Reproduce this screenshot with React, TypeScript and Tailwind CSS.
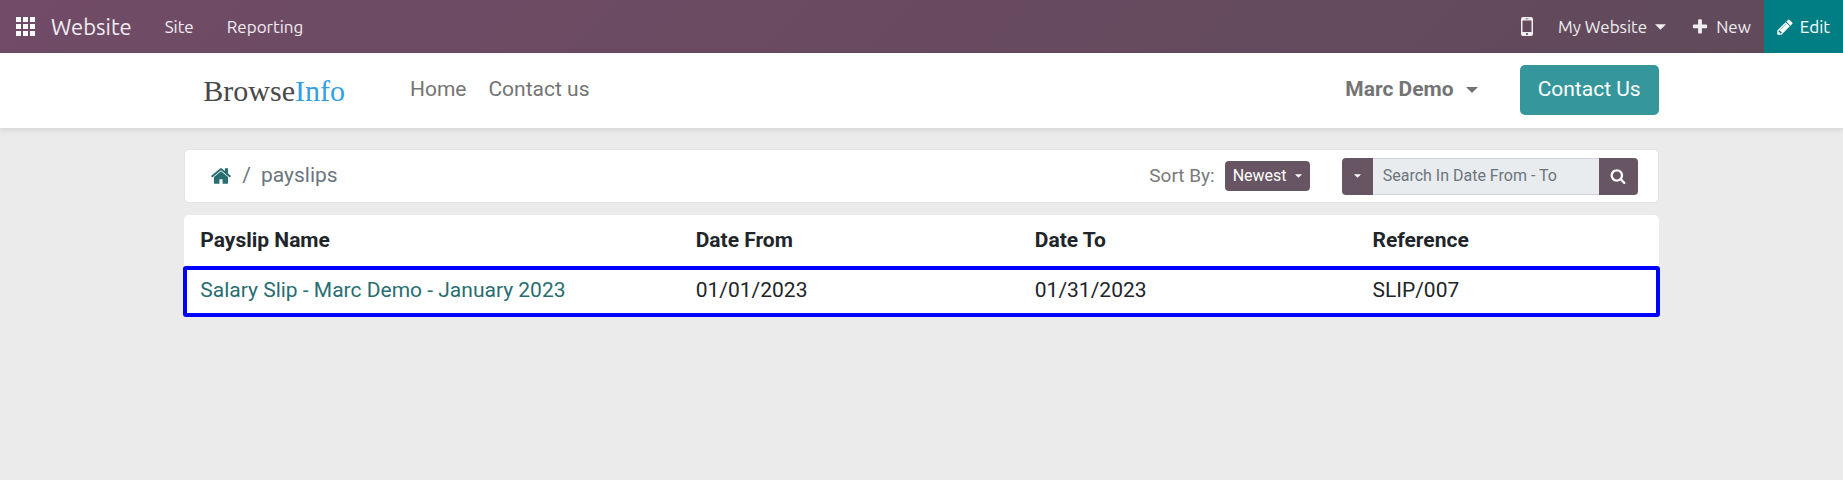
import type { ReactNode } from "react";

type IconProps = { className?: string };

function Glyph({ className = "", children }: IconProps & { children: ReactNode }) {
  return (
    <svg viewBox="0 0 1792 1792" fill="currentColor" aria-hidden="true" className={`shrink-0 ${className}`}>
      {children}
    </svg>
  );
}

const HomeIcon = ({ className }: IconProps) => (
  <Glyph className={className}>
    <path d="M1472 992v480q0 26-19 45t-45 19h-384v-384h-256v384h-384q-26 0-45-19t-19-45v-480q0-1 .5-3t.5-3l575-474 575 474q1 2 1 6zm223-69l-62 74q-8 9-21 11h-3q-13 0-21-7l-692-577-692 577q-12 8-24 7-13-2-21-11l-62-74q-8-10-7-23.5t11-21.5l719-599q32-26 76-26t76 26l244 204v-195q0-14 9-23t23-9h192q14 0 23 9t9 23v408l219 182q10 8 11 21.5t-7 23.5z" />
  </Glyph>
);

const SearchIcon = ({ className }: IconProps) => (
  <Glyph className={className}>
    <path d="M1216 832q0-185-131.5-316.5t-316.5-131.5-316.5 131.5-131.5 316.5 131.5 316.5 316.5 131.5 316.5-131.5 131.5-316.5zm512 832q0 52-38 90t-90 38q-54 0-90-38l-343-342q-179 124-399 124-143 0-273.5-55.5t-225-150-150-225-55.5-273.5 55.5-273.5 150-225 225-150 273.5-55.5 273.5 55.5 225 150 150 225 55.5 273.5q0 220-124 399l343 343q37 37 37 90z" />
  </Glyph>
);

const PencilIcon = ({ className }: IconProps) => (
  <Glyph className={className}>
    <path d="M491 1536l91-91-235-235-91 91v107h128v128h107zm523-928q0-22-22-22-10 0-17 7l-542 542q-7 7-7 17 0 22 22 22 10 0 17-7l542-542q7-7 7-17zm-54-192l416 416-832 832h-416v-416zm683 96q0 53-37 90l-166 166-416-416 166-165q36-38 90-38 53 0 91 38l235 234q37 39 37 91z" />
  </Glyph>
);

const PlusIcon = ({ className }: IconProps) => (
  <Glyph className={className}>
    <path d="M1600 736v192q0 40-28 68t-68 28h-416v416q0 40-28 68t-68 28h-192q-40 0-68-28t-28-68v-416h-416q-40 0-68-28t-28-68v-192q0-40 28-68t68-28h416v-416q0-40 28-68t68-28h192q40 0 68 28t28 68v416h416q40 0 68 28t28 68z" />
  </Glyph>
);

const MobileIcon = ({ className = "" }: IconProps) => (
  <svg viewBox="0 0 12 19" fill="currentColor" aria-hidden="true" className={`shrink-0 ${className}`}>
    <path
      fillRule="evenodd"
      d="M2 0h8a2 2 0 0 1 2 2v15a2 2 0 0 1-2 2H2a2 2 0 0 1-2-2V2a2 2 0 0 1 2-2zM2 3.4a.5.5 0 0 0-.5.5v10.6a.5.5 0 0 0 .5.5h8a.5.5 0 0 0 .5-.5V3.9a.5.5 0 0 0-.5-.5zM6 15.9a1.1 1.1 0 1 0 0 2.2 1.1 1.1 0 0 0 0-2.2zM4.6 1.5v.7h2.8v-.7z"
    />
  </svg>
);

const Caret = ({ className = "" }: IconProps) => (
  <svg viewBox="0 0 12 6" fill="currentColor" aria-hidden="true" className={`shrink-0 ${className}`}>
    <path d="M0 0h12L6 6z" />
  </svg>
);

const GridIcon = ({ className = "" }: IconProps) => (
  <svg viewBox="0 0 19 19" fill="currentColor" aria-hidden="true" className={`shrink-0 ${className}`}>
    {[0, 7, 14].flatMap((y) => [0, 7, 14].map((x) => <rect key={`${x}-${y}`} x={x} y={y} width="5" height="5" />))}
  </svg>
);

const slips = [
  { name: "Salary Slip - Marc Demo - January 2023", from: "01/01/2023", to: "01/31/2023", reference: "SLIP/007" },
];

function AdminBar() {
  return (
    <header className="flex h-[53px] items-stretch justify-between bg-linear-135 from-[#714b67] to-[#5f4a5a] font-[Ubuntu,'Noto_Sans',sans-serif] text-[17px] text-white/90">
      <nav className="flex items-center" aria-label="Apps">
        <button type="button" aria-label="All apps" className="px-4 text-white">
          <GridIcon className="size-[19px]" />
        </button>
        <a href="#website" className="text-[22px]">Website</a>
        <a href="#site" className="ml-[33px]">Site</a>
        <a href="#reporting" className="ml-[33px]">Reporting</a>
      </nav>
      <div className="flex items-stretch">
        <button type="button" aria-label="Mobile preview" className="px-[13px]">
          <MobileIcon className="h-[19px] w-3" />
        </button>
        <button type="button" className="flex items-center gap-2 px-3">
          My Website
          <Caret className="h-[6px] w-[11px]" />
        </button>
        <button type="button" className="flex items-center gap-[7px] px-[13px]">
          <PlusIcon className="size-[18px]" />
          New
        </button>
        <button type="button" className="flex items-center gap-1.5 bg-[#017e84] pr-[13px] pl-3 text-white">
          <PencilIcon className="size-[18px]" />
          Edit
        </button>
      </div>
    </header>
  );
}

function SiteHeader() {
  return (
    <div className="relative bg-white shadow-[0_2px_6px_rgba(0,0,0,0.1)]">
      <div className="mx-auto flex h-[75px] w-4/5 items-center pb-px pl-[19px] text-[21px] text-[#747474]">
        <a href="#home" className="font-['Liberation_Serif',serif] text-[30px] text-[#484848]">
          Browse<span className="text-[#339ee8]">Info</span>
        </a>
        <nav className="ml-[65px] flex gap-[22px]" aria-label="Main">
          <a href="#home">Home</a>
          <a href="#contact">Contact us</a>
        </nav>
        <button type="button" className="ml-auto flex items-center gap-3 font-bold">
          Marc Demo
          <Caret className="h-[6px] w-3" />
        </button>
        <a
          href="#contact"
          className="ml-[42px] flex h-[50px] items-center rounded-[5px] bg-[#35979c] px-[18px] text-white"
        >
          Contact Us
        </a>
      </div>
    </div>
  );
}

function Toolbar() {
  return (
    <div className="flex h-[54px] items-center justify-between rounded-[5px] border border-[#e2e4e8] bg-white pr-5 pl-[25px]">
      <nav aria-label="Breadcrumb" className="flex items-center gap-[10px] text-[21px] text-[#6c757d]">
        <a href="#home" aria-label="Home" className="text-[#286e71]">
          <HomeIcon className="size-[22px]" />
        </a>
        <span>/</span>
        <span>payslips</span>
      </nav>
      <div className="flex items-center">
        <label htmlFor="sort" className="mr-[10px] text-[19px] text-[#7a7a7a]">Sort By:</label>
        <div className="relative mr-8 flex items-center">
          <select
            id="sort"
            className="h-[30px] w-[85px] appearance-none rounded-[4px] bg-[#685563] pl-2 text-base text-white"
          >
            <option>Newest</option>
          </select>
          <Caret className="pointer-events-none absolute right-2 h-1 w-[7px] text-white" />
        </div>
        <form role="search" className="flex h-[37px]">
          <button
            type="button"
            aria-label="Search options"
            className="flex w-[31px] items-center justify-center rounded-l-[4px] bg-[#685563] text-white"
          >
            <Caret className="h-1 w-[7px]" />
          </button>
          <input
            type="search"
            aria-label="Search"
            placeholder="Search In Date From - To"
            className="w-[226px] border-y border-[#ced4da] bg-[#e8ecef] px-[10px] text-base placeholder:text-[#6c757d]"
          />
          <button
            type="submit"
            aria-label="Search"
            className="flex w-[39px] items-center justify-center rounded-r-[4px] bg-[#685563] text-white"
          >
            <SearchIcon className="size-4" />
          </button>
        </form>
      </div>
    </div>
  );
}

function PayslipTable() {
  return (
    <table className="mt-3 w-full table-fixed rounded-t-[5px] bg-white text-left text-[21px] text-[#212529]">
      <colgroup>
        <col className="w-[33.6%]" />
        <col className="w-[23%]" />
        <col className="w-[22.9%]" />
        <col />
      </colgroup>
      <thead>
        <tr className="h-[52px]">
          <th className="pl-4">Payslip Name</th>
          <th className="pl-4">Date From</th>
          <th className="pl-4">Date To</th>
          <th className="pl-4">Reference</th>
        </tr>
      </thead>
      <tbody>
        {slips.map((slip) => (
          <tr key={slip.reference} className="h-[49px] rounded-[2px] outline-4 -outline-offset-3 outline-[#0000ff]">
            <td className="pb-0.5 pl-4">
              <a href="#slip" className="text-[#286e71]">{slip.name}</a>
            </td>
            <td className="pb-0.5 pl-4">{slip.from}</td>
            <td className="pb-0.5 pl-4">{slip.to}</td>
            <td className="pb-0.5 pl-4">{slip.reference}</td>
          </tr>
        ))}
      </tbody>
    </table>
  );
}

export default function App() {
  return (
    <div className="flow-root min-h-screen bg-[#ebebeb] font-[Roboto,sans-serif]">
      <AdminBar />
      <SiteHeader />
      <main className="mx-auto mt-[21px] w-4/5">
        <Toolbar />
        <PayslipTable />
      </main>
    </div>
  );
}
